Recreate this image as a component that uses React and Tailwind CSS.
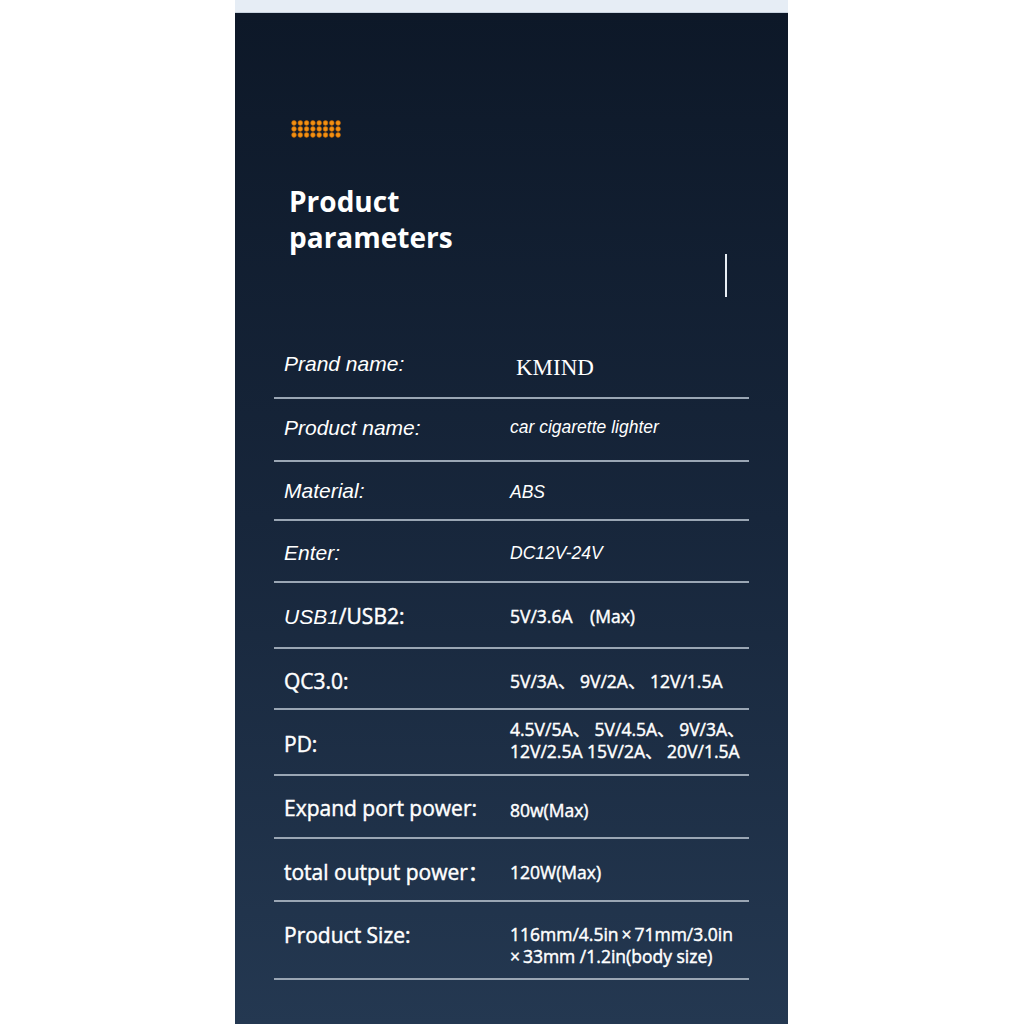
const rows = [
  { label: "Prand name:", value: "KMIND", kind: "old", h: "h-[68px]", lo: "", vo: "top-[4px]" },
  { label: "Product name:", value: "car cigarette lighter", kind: "old", h: "h-[63px]", lo: "-top-[2px]", vo: "-top-[2px]" },
  { label: "Material:", value: "ABS", kind: "old", h: "h-[59px]", lo: "", vo: "top-[2px]" },
  { label: "Enter:", value: "DC12V-24V", kind: "old", h: "h-[62px]", lo: "top-[2px]", vo: "top-[2px]" },
  { label: "USB2:", value: "5V/3.6A\u3000(Max)", kind: "usb", h: "h-[66px]", lo: "top-[2px]", vo: "top-[1px]" },
  { label: "QC3.0:", value: "5V/3A\u3001 9V/2A\u3001 12V/1.5A", kind: "new", h: "h-[61px]", lo: "top-[3px]", vo: "top-[3px]" },
  {
    label: "PD:",
    value: ["4.5V/5A\u3001 5V/4.5A\u3001 9V/3A\u3001", "12V/2.5A 15V/2A\u3001 20V/1.5A"],
    kind: "new",
    h: "h-[66px]",
    lo: "top-[3px]",
    vo: "-top-[2px]",
  },
  { label: "Expand port power:", value: "80w(Max)", kind: "new", h: "h-[63px]", lo: "top-[2px]", vo: "top-[4px]" },
  { label: "total output power\uff1a", value: "120W(Max)", kind: "new", h: "h-[63px]", lo: "top-[3px]", vo: "top-[3px]" },
  {
    label: "Product Size:",
    value: ["116mm/4.5in\u2009\u00d7\u200971mm/3.0in", "\u00d7\u200933mm /1.2in(body size)"],
    kind: "new",
    h: "h-[78px]",
    lo: "-top-[4px]",
    vo: "top-[5px]",
  },
];

const openSans = "font-['Open_Sans','Noto_Sans_CJK_SC',sans-serif]";
const arial = "font-['Liberation_Sans','Noto_Sans_CJK_SC',sans-serif]";
const thick = "[-webkit-text-stroke:0.45px_white]";

function Dots() {
  const dots = [];
  for (let r = 0; r < 3; r++) {
    for (let c = 0; c < 8; c++) {
      dots.push(
        <circle key={r + "-" + c} cx={3 + c * 6.3} cy={3 + r * 6} r="2.4" fill="#f39112" stroke="#b85f06" strokeWidth="0.6" />
      );
    }
  }
  return (
    <svg width="52" height="18" viewBox="0 0 52 18">
      {dots}
    </svg>
  );
}

function Row({ row }) {
  let label;
  let value;
  if (row.kind === "old") {
    label = <span className={`${arial} italic text-[21px] text-white`}>{row.label}</span>;
    value =
      row.value === "KMIND" ? (
        <span className="font-['Liberation_Serif',serif] text-[23px] text-white ml-[6px]">KMIND</span>
      ) : (
        <span className={`${arial} italic text-[17.5px] text-white`}>{row.value}</span>
      );
  } else {
    label =
      row.kind === "usb" ? (
        <span className="text-[21px] text-white">
          <span className={`${arial} italic`}>USB1</span>
          <span className={`${openSans} ${thick}`}>/USB2:</span>
        </span>
      ) : (
        <span className={`${openSans} ${thick} text-[21px] text-white`}>{row.label}</span>
      );
    value = Array.isArray(row.value) ? (
      <div className={`${openSans} ${thick} text-[17.5px] leading-[22px] text-white`}>
        {row.value.map((v, i) => (
          <div key={i}>{v}</div>
        ))}
      </div>
    ) : (
      <span className={`${openSans} ${thick} text-[17.5px] text-white`}>{row.value}</span>
    );
  }
  return (
    <div className={`flex items-center ${row.h} border-b-2 border-[#9aa6b4]`}>
      <div className={`w-[236px] pl-[10px] shrink-0 relative ${row.lo}`}>{label}</div>
      <div className={`flex-1 whitespace-nowrap relative ${row.vo}`}>{value}</div>
    </div>
  );
}

export default function App() {
  return (
    <div className="min-h-screen bg-white">
      <div className="ml-[235px] w-[553px] h-[1024px] flex flex-col">
        <div className="h-[13px] bg-[#e6edf5] border-b border-[#c9d3df]" />
        <div className="flex-1 bg-gradient-to-b from-[#0d1828] via-[#17263b] to-[#243851] pt-[107px]">
          <div className="pl-[56px]">
            <Dots />
          </div>
          <h1 className={`${openSans} font-bold text-[28px] leading-[36px] text-white pl-[54px] mt-[45px]`}>
            Product
            <br />
            parameters
          </h1>
          <div className="flex justify-end pr-[61px] mt-[-1px]">
            <div className="w-[2px] h-[43px] bg-[#e8eef4]" />
          </div>
          <div className="ml-[39px] w-[475px] mt-[34px]">
            {rows.map((r) => (
              <Row key={r.label} row={r} />
            ))}
          </div>
        </div>
      </div>
    </div>
  );
}
